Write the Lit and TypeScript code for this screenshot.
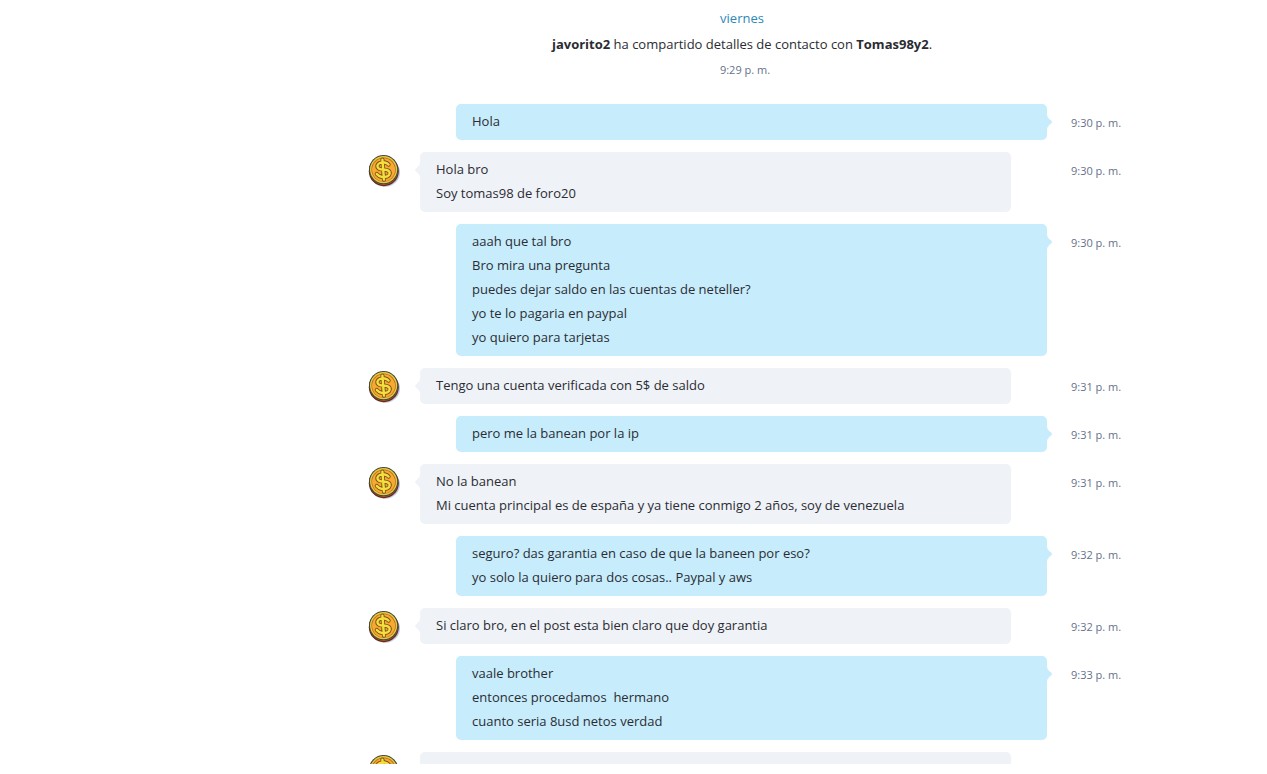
import { LitElement, html, css, svg } from "lit";
import { customElement, property } from "lit/decorators.js";
import { classMap } from "lit/directives/class-map.js";

interface Group {
  own: boolean;
  time: string;
  lines: string[];
}

const groups: Group[] = [
  { own: true, time: "9:30 p. m.", lines: ["Hola"] },
  { own: false, time: "9:30 p. m.", lines: ["Hola bro", "Soy tomas98 de foro20"] },
  {
    own: true,
    time: "9:30 p. m.",
    lines: [
      "aaah que tal bro",
      "Bro mira una pregunta",
      "puedes dejar saldo en las cuentas de neteller?",
      "yo te lo pagaria en paypal",
      "yo quiero para tarjetas",
    ],
  },
  { own: false, time: "9:31 p. m.", lines: ["Tengo una cuenta verificada con 5$ de saldo"] },
  { own: true, time: "9:31 p. m.", lines: ["pero me la banean por la ip"] },
  {
    own: false,
    time: "9:31 p. m.",
    lines: ["No la banean", "Mi cuenta principal es de españa y ya tiene conmigo 2 años, soy de venezuela"],
  },
  {
    own: true,
    time: "9:32 p. m.",
    lines: ["seguro? das garantia en caso de que la baneen por eso?", "yo solo la quiero para dos cosas.. Paypal y aws"],
  },
  { own: false, time: "9:32 p. m.", lines: ["Si claro bro, en el post esta bien claro que doy garantia"] },
  {
    own: true,
    time: "9:33 p. m.",
    lines: ["vaale brother", "entonces procedamos  hermano", "cuanto seria 8usd netos verdad"],
  },
  { own: false, time: "", lines: [] },
];

const dollar =
  "M20.6 9.6C18.8 7.2 14.6 6.8 11.8 8C8.8 9.4 8.6 12.6 11.2 13.8C13.6 14.9 17.6 14.2 20.2 15.6C22.6 17 22 20.2 19.2 21.4C15.8 22.8 11.2 22 8.8 19M14.4 4.6L16 24.6";

const coin = svg`
  <ellipse cx="17" cy="17.4" rx="15" ry="14.4" fill="#8d9cc4" opacity=".55"/>
  <circle cx="15.8" cy="16.2" r="15" fill="#5f2c22"/>
  <circle cx="15.8" cy="15.9" r="14" fill="#c8541d"/>
  <circle cx="15.6" cy="14.6" r="14.6" fill="#45463a"/>
  <circle cx="15.6" cy="14.6" r="13.6" fill="#e6cb3e"/>
  <circle cx="15.6" cy="14.6" r="12.2" fill="#a8701f"/>
  <circle cx="15.6" cy="14.8" r="11.5" fill="#fda733"/>
  <path d=${dollar} fill="none" stroke="#7c5519" stroke-width="4.2" stroke-linecap="round"/>
  <path d=${dollar} fill="none" stroke="#f5df3f" stroke-width="2.4" stroke-linecap="round"/>`;

@customElement("message-group")
export class MessageGroup extends LitElement {
  @property({ attribute: false }) group!: Group;

  static styles = css`
    :host {
      display: grid;
      grid-template-columns: 32px minmax(0, 1fr) 49px;
      align-items: start;
    }
    .avatar {
      display: block;
      width: 32px;
      height: 32px;
      margin-top: 3px;
    }
    .bubble {
      position: relative;
      grid-column: 2;
      min-height: 24px;
      margin: 0 60px 0 20px;
      padding: 5px 16px 7px;
      border-radius: 5px;
      background: #eff2f7;
      color: #2b2c33;
    }
    .bubble.own {
      margin: 0 24px 0 56px;
      background: #c7ecfc;
    }
    .line {
      margin: 0;
      line-height: 24px;
      white-space: pre-wrap;
    }
    .tail {
      position: absolute;
      top: 10px;
      left: -5px;
      width: 6px;
      height: 16px;
      fill: #eff2f7;
    }
    .own .tail {
      left: auto;
      right: -5px;
      fill: #c7ecfc;
      transform: scaleX(-1);
    }
    .time {
      grid-column: 3;
      padding-top: 7px;
      font-size: 11px;
      line-height: 24px;
      white-space: nowrap;
      color: #66728a;
    }
  `;

  render() {
    const { own, time, lines } = this.group;
    return html`
      ${own ? null : html`<svg class="avatar" viewBox="0 0 32 32" aria-hidden="true">${coin}</svg>`}
      <div class=${classMap({ bubble: true, own })}>
        <svg class="tail" viewBox="0 0 6 16" aria-hidden="true">
          <path d="M6 0H5C5 3 3.5 4.5 1 6.5Q-1 8 1 9.5C3.5 11.5 5 13 5 16H6Z" />
        </svg>
        ${lines.map((line) => html`<p class="line">${line}</p>`)}
      </div>
      ${time ? html`<time class="time">${time}</time>` : null}
    `;
  }
}

@customElement("app-root")
export class AppRoot extends LitElement {
  static styles = css`
    :host {
      display: block;
      box-sizing: border-box;
      height: 100vh;
      padding-bottom: 10px;
      background: #fff;
      font-family: "Segoe UI", "Open Sans", "Noto Sans", sans-serif;
      font-size: 13px;
      color: #2b2c33;
    }
    .chat {
      box-sizing: border-box;
      height: 100%;
      overflow: hidden;
      padding: 5px 147px 0 368px;
    }
    .notice {
      display: grid;
      justify-items: center;
      margin: 0 4px 21px 0;
      line-height: 26px;
    }
    .day {
      color: #2b88b9;
    }
    .notice-text {
      margin: 0;
    }
    .notice-time {
      padding-left: 6px;
      font-size: 11px;
      color: #66728a;
    }
    .groups {
      display: grid;
      gap: 12px;
    }
  `;

  render() {
    return html`
      <main class="chat">
        <header class="notice">
          <span class="day">viernes</span>
          <p class="notice-text"><b>javorito2</b> ha compartido detalles de contacto con <b>Tomas98y2</b>.</p>
          <time class="notice-time">9:29 p. m.</time>
        </header>
        <section class="groups">
          ${groups.map((group) => html`<message-group .group=${group}></message-group>`)}
        </section>
      </main>
    `;
  }
}
